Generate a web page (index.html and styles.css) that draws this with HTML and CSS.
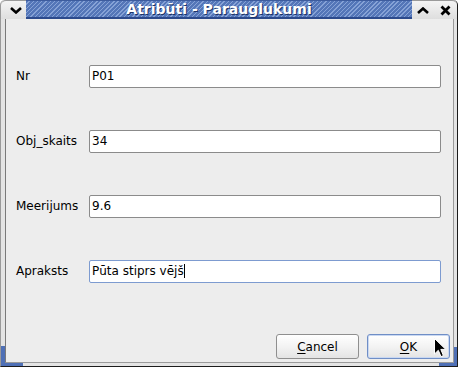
FILE: index.html
```html
<!DOCTYPE html>
<html>
<head>
<meta charset="utf-8">
<link rel="stylesheet" href="styles.css">
</head>
<body>
<div class="win">
  <div class="titlebar">
    <div class="tbtn menu">
      <svg width="12" height="7" viewBox="0 0 12 7"><path d="M1 1 L6 5.5 L11 1" fill="none" stroke="#000" stroke-width="2.6" stroke-linejoin="miter"/></svg>
    </div>
    <div class="title"><span>Atribūti - Parauglukumi</span></div>
    <div class="tbtn">
      <svg width="12" height="7" viewBox="0 0 12 7"><path d="M1 6 L6 1.5 L11 6" fill="none" stroke="#000" stroke-width="2.6" stroke-linejoin="miter"/></svg>
    </div>
    <div class="tbtn close">
      <svg width="11" height="11" viewBox="0 0 11 11"><path d="M1.5 1.5 L9.5 9.5 M9.5 1.5 L1.5 9.5" fill="none" stroke="#000" stroke-width="2.8"/></svg>
    </div>
  </div>
  <div class="client">
    <div class="form">
      <div class="label">Nr</div>
      <div class="entry">P01</div>
      <div class="label">Obj_skaits</div>
      <div class="entry">34</div>
      <div class="label">Meerijums</div>
      <div class="entry">9.6</div>
      <div class="label">Apraksts</div>
      <div class="entry focus">Pūta stiprs vējš<span class="caret"></span></div>
    </div>
    <div class="buttons">
      <div class="btn"><u>C</u>ancel</div>
      <div class="btn default"><u>O</u>K
        <svg class="cursor" width="13" height="20" viewBox="0 0 13 20"><path d="M0.5 0.5 L0.5 16 L4.3 12.3 L7 18.6 L9.4 17.6 L6.8 11.4 L11.8 11.4 Z" fill="#000" stroke="#fff" stroke-width="1"/></svg>
      </div>
    </div>
  </div>
</div>
</body>
</html>
```

FILE: styles.css
```css
html, body {
  margin: 0;
  padding: 0;
  background: #ffffff;
}
body {
  font-family: "DejaVu Sans", sans-serif;
  font-size: 12px;
  color: #000;
}
.win {
  position: relative;
  width: 456px;
  height: 366px;
  display: flex;
  flex-direction: column;
  background: #e4e4e4;
  border-left: 1px solid #9a9a9a;
  border-right: 1px solid #1c1c1c;
  border-bottom: 1px solid #1c1c1c;
  border-radius: 5px 5px 0 0;
}
.win::before {
  content: "";
  position: absolute;
  left: 0;
  bottom: 0;
  width: 22px;
  height: 20px;
  border-left: 4px solid #4f70b6;
  border-bottom: 3px solid #4f70b6;
  box-sizing: border-box;
}
.win::after {
  content: "";
  position: absolute;
  right: 0;
  bottom: 0;
  width: 18px;
  height: 19px;
  border-right: 3px solid #4f70b6;
  border-bottom: 3px solid #4f70b6;
  box-sizing: border-box;
}
.titlebar {
  height: 19px;
  display: flex;
  align-items: stretch;
  background: linear-gradient(#f4f4f4, #dedede);
  border-top: 1px solid #9a9a9a;
  border-radius: 5px 5px 0 0;
  box-sizing: border-box;
  padding-left: 5px;
  padding-right: 1px;
}
.tbtn {
  width: 22px;
  display: flex;
  align-items: center;
  justify-content: center;
}
.tbtn.menu {
  width: 20px;
}
.title {
  flex: 1;
  display: flex;
  align-items: center;
  justify-content: center;
  background:
    repeating-linear-gradient(135deg, #5476b8 0px, #5476b8 2px, #86a2d6 2px, #86a2d6 3px);
  border-bottom: 2px solid #2c4a8c;
  border-top: 1px solid #3d5c9e;
  margin-top: -1px;
  color: #fff;
  font-weight: bold;
  font-size: 14px;
  text-shadow: 1px 1px 0 #1d3468;
  letter-spacing: 0;
}
.title span {
  margin-top: -1px;
}
.client {
  flex: 1;
  display: flex;
  flex-direction: column;
  margin: 0 3px 3px 4px;
  background: #ededed;
  border-left: 1px solid #7a7a7a;
  border-right: 1px solid #9a9a9a;
  border-bottom: 1px solid #9a9a9a;
}
.form {
  display: grid;
  grid-template-columns: 73px 352px;
  grid-auto-rows: 23px;
  row-gap: 42px;
  padding: 46px 0 0 10px;
  align-items: center;
}
.label {
  line-height: 23px;
}
.entry {
  height: 23px;
  box-sizing: border-box;
  background: #fff;
  border: 1px solid #8b8b8b;
  border-radius: 2px;
  padding-left: 2px;
  line-height: 21px;
  white-space: nowrap;
}
.entry.focus {
  border-color: #7d9bd0;
}
.caret {
  display: inline-block;
  width: 1px;
  height: 14px;
  background: #000;
  vertical-align: -3px;
}
.buttons {
  margin-top: auto;
  display: flex;
  justify-content: flex-end;
  gap: 8px;
  padding: 0 3px 3px 0;
}
.btn {
  position: relative;
  width: 83px;
  height: 25px;
  box-sizing: border-box;
  border: 1px solid #8f8f8f;
  border-radius: 3px;
  background: linear-gradient(#ffffff, #f3f3f3 50%, #e4e4e4);
  display: flex;
  align-items: center;
  justify-content: center;
  line-height: 1;
}
.btn.default {
  border-color: #6f8ec6;
  box-shadow: inset 0 0 0 1px #c9d8f2;
}
.btn u {
  text-decoration: underline;
  text-underline-offset: 2px;
}
.cursor {
  position: absolute;
  left: 66px;
  top: 3px;
}
```
